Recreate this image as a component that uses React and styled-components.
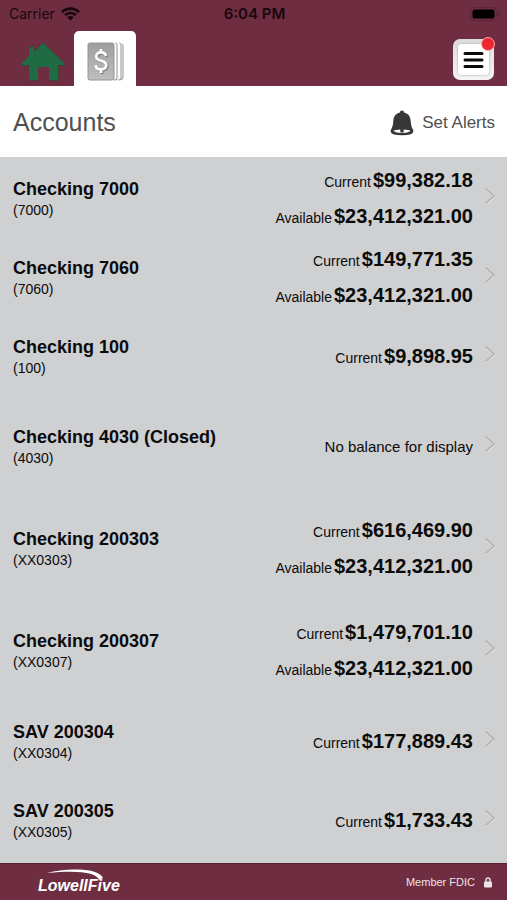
import styled, { createGlobalStyle } from "styled-components";

const accounts = [
    { name: "Checking 7000", mask: "(7000)", current: "$99,382.18", available: "$23,412,321.00" },
    { name: "Checking 7060", mask: "(7060)", current: "$149,771.35", available: "$23,412,321.00" },
    { name: "Checking 100", mask: "(100)", current: "$9,898.95" },
    { name: "Checking 4030 (Closed)", mask: "(4030)", roomy: true },
    { name: "Checking 200303", mask: "(XX0303)", current: "$616,469.90", available: "$23,412,321.00", roomy: true },
    { name: "Checking 200307", mask: "(XX0307)", current: "$1,479,701.10", available: "$23,412,321.00", roomy: true },
    { name: "SAV 200304", mask: "(XX0304)", current: "$177,889.43" },
    { name: "SAV 200305", mask: "(XX0305)", current: "$1,733.43" },
];

const WifiIcon = () => (
    <svg width="19" height="14" viewBox="0 0 19 14" aria-hidden="true">
        <path d="M1 5.2a12 12 0 0 1 17 0M4 8.2a7.8 7.8 0 0 1 11 0" fill="none" stroke="#16080d" strokeWidth="2.6" />
        <path d="M6.4 10.4a4.4 4.4 0 0 1 6.2 0l-3.1 3.1z" fill="#16080d" />
    </svg>
);

const BatteryIcon = () => (
    <svg width="30" height="14" viewBox="0 0 30 14" aria-hidden="true">
        <rect x="0.5" y="0.5" width="26" height="13" rx="4" fill="none" stroke="#592536" />
        <rect x="2.5" y="2.5" width="22" height="9" rx="2" fill="#000" />
        <path d="M28 5a2 2 0 0 1 0 4z" fill="#592536" />
    </svg>
);

const HomeIcon = () => (
    <svg width="46" height="40" viewBox="0 0 46 40" aria-hidden="true">
        <path d="M23 0 45 22l-1 2h-5v13q0 2-2 2h-8V25H18v14h-7q-2 0-2-2V24H2l-1-2 8-8V5l2-2h3v6z" fill="#3d4334" />
        <path d="M23 1 45 22l-1 1h-6v13q0 2-2 2h-7V25H18v13h-7q-2 0-2-2V23H2l-1-1 8-8V6l1-1h4v5z" fill="#1f6b43" />
    </svg>
);

const LedgerIcon = () => (
    <svg width="37" height="39" viewBox="0 0 37 39" aria-hidden="true">
        <defs>
            <linearGradient id="ledger" x1="0" y1="0" x2="0" y2="1">
                <stop offset="0" stopColor="#9c9e9f" />
                <stop offset="1" stopColor="#bcbebf" />
            </linearGradient>
        </defs>
        <rect x="1" y="1" width="26" height="37" rx="2" fill="url(#ledger)" stroke="#929495" />
        <path d="M28 1q2 0 2 2v33q0 2-3 2M32 1q2 0 2 2v33q0 2-3 2M35 2q1 0 1 2v31q0 2-2 3" fill="none" stroke="#a3a5a6" strokeWidth="1.2" />
        <g fill="none" strokeWidth="2.6">
            <path d="M15 8v4M15 28v4M20 15c-.5-2.400-2.300-3.600-5-3.600-2.800 0-4.800 1.500-4.800 4 0 5.400 10 3.200 10 8.600 0 2.800-2.200 4.400-5.200 4.400-3.100 0-5-1.500-5.400-4.200" stroke="#7b7d7e" />
            <path d="M14 7v4M14 27v4M19 14c-.5-2.400-2.300-3.600-5-3.600-2.800 0-4.800 1.500-4.800 4 0 5.400 10 3.200 10 8.600 0 2.800-2.200 4.400-5.200 4.400-3.100 0-5-1.500-5.400-4.200" stroke="#fff" />
        </g>
    </svg>
);

const MenuIcon = () => (
    <svg width="21" height="18" viewBox="0 0 21 18" aria-hidden="true">
        <path d="M2 2.500h17M2 9h17M2 15.500h17" stroke="#0b0b0b" strokeWidth="3" strokeLinecap="round" />
    </svg>
);

const BellIcon = () => (
    <svg width="24" height="26" viewBox="0 0 24 26" aria-hidden="true">
        <path d="M10 2.600V2q0-1.500 2-1.500T14 2v.6c4.600 1 6.400 4.400 6.700 8.400.3 4 .7 6 2.300 8.600q.5 1 .2 2.400-.8 3.300-11.200 3.300T.8 22Q.5 20.600 1 19.600c1.600-2.600 2-4.600 2.300-8.600.3-4 2.100-7.400 6.700-8.400z" fill="#373737" />
        <path d="M3.500 20.600q8.500-2.400 17 0-1 2.400-8.500 2.400t-8.500-2.400z" fill="#fff" />
        <path d="M10.300 18.500h3.400v3.400q-1.700 1.200-3.400 0z" fill="#373737" />
    </svg>
);

const ChevronIcon = () => (
    <svg width="12" height="19" viewBox="0 0 12 19" aria-hidden="true">
        <path d="M2 3l8.500 7L2 17.500" fill="none" stroke="#e0e0e1" strokeWidth="1.5" />
        <path d="M1.500 1.500l8.500 7.500-8.500 7.500" fill="none" stroke="#b0b1b3" strokeWidth="1.5" />
    </svg>
);

const LockIcon = () => (
    <svg width="8" height="11" viewBox="0 0 8 11" aria-hidden="true">
        <path d="M2 5V3a2 2 0 0 1 4 0v2" fill="none" stroke="#eee3e6" strokeWidth="1.4" />
        <rect x="0" y="4.5" width="8" height="6" rx="1" fill="#eee3e6" />
    </svg>
);

const AccountRow = ({ account }) => (
    <li>
        <Row type="button" $roomy={account.roomy}>
            <Details>
                <Name>{account.name}</Name>
                <Mask>{account.mask}</Mask>
            </Details>
            <Balances>
                {account.current && <Balance>Current<Amount>{account.current}</Amount></Balance>}
                {account.available && <Balance>Available<Amount>{account.available}</Amount></Balance>}
                {!account.current && <NoBalance>No balance for display</NoBalance>}
            </Balances>
            <Chevron><ChevronIcon /></Chevron>
        </Row>
    </li>
);

export default function App() {
    return (
        <Page>
            <GlobalStyle />
            <Header>
                <StatusBar>
                    <Carrier>Carrier <WifiIcon /></Carrier>
                    <Time>6:04 PM</Time>
                    <Battery><BatteryIcon /></Battery>
                </StatusBar>
                <NavBar>
                    <Tab href="#home" aria-label="Home"><HomeIcon /></Tab>
                    <Tab href="#accounts" aria-label="Accounts" $active><LedgerIcon /></Tab>
                    <MenuButton type="button" aria-label="Menu">
                        <MenuFace><MenuIcon /></MenuFace>
                        <Badge />
                    </MenuButton>
                </NavBar>
            </Header>
            <TitleBar>
                <Title>Accounts</Title>
                <AlertsButton type="button"><BellIcon />Set Alerts</AlertsButton>
            </TitleBar>
            <AccountList>
                {accounts.map((account) => <AccountRow key={account.name} account={account} />)}
            </AccountList>
            <Footer>
                <Logo>
                    LowellFive
                    <Swoosh viewBox="0 0 56 12" aria-hidden="true">
                        <path d="M0 4C18-1 52-2 56 9l-4 2C50 3 30 1 0 4z" fill="#fff" />
                    </Swoosh>
                </Logo>
                <Member>Member FDIC <LockIcon /></Member>
            </Footer>
        </Page>
    );
}

const GlobalStyle = createGlobalStyle`
  * {
    box-sizing: border-box;
  }
  body {
    margin: 0;
    font-family: "Liberation Sans", Arial, sans-serif;
    background: #cfd0d2;
  }
  button {
    font-family: inherit;
    border: none;
    background: none;
    padding: 0;
    cursor: pointer;
  }
  svg {
    display: block;
    flex-shrink: 0;
  }
`

const Page = styled.div`
  display: flex;
  flex-direction: column;
  min-height: 100vh;
`

const Header = styled.header`
  background: #6e2d40;
`

const StatusBar = styled.div`
  display: grid;
  grid-template-columns: 1fr auto 1fr;
  align-items: center;
  height: 27px;
  padding: 0 7px 0 9px;
  font-family: Inter, sans-serif;
  font-size: 14px;
  color: #16080d;
`

const Carrier = styled.div`
  display: flex;
  align-items: center;
  gap: 6px;
`

const Time = styled.div`
  font-size: 15px;
  font-weight: 600;
`

const Battery = styled.div`
  justify-self: end;
`

const NavBar = styled.nav`
  display: flex;
  align-items: flex-end;
  height: 59px;
  padding: 0 13px 0 12px;
`

const Tab = styled.a`
  display: flex;
  align-items: center;
  justify-content: center;
  width: 62px;
  height: 55px;
  padding-top: 6px;
  border-radius: 5px 5px 0 0;
  background: ${(props) => (props.$active ? "#fff" : "transparent")};
`

const MenuButton = styled.button`
  position: relative;
  width: 41px;
  height: 41px;
  margin: 0 0 6px auto;
  border-radius: 7px;
  background: linear-gradient(#dcdcdc, #f4f4f4);

  && {
    padding: 5px;
  }
`

const MenuFace = styled.span`
  display: flex;
  align-items: center;
  justify-content: center;
  height: 100%;
  border-radius: 3px;
  background: #fff;
  box-shadow: 0 0 2px #999;
`

const Badge = styled.span`
  position: absolute;
  top: -2px;
  right: -1px;
  width: 14px;
  height: 14px;
  border: 1px solid #f6a5ab;
  border-radius: 50%;
  background: #ed2630;
`

const TitleBar = styled.div`
  display: flex;
  align-items: center;
  justify-content: space-between;
  height: 71px;
  padding: 2px 12px 0 13px;
  background: #fff;
`

const Title = styled.h1`
  margin: 0;
  font-size: 25px;
  font-weight: 400;
  color: #505050;
`

const AlertsButton = styled.button`
  display: flex;
  align-items: center;
  gap: 8px;
  font-size: 17px;
  color: #505050;
`

const AccountList = styled.ul`
  flex: 1;
  margin: 0;
  padding: 0;
  list-style: none;
  background: #cfd0d2;
`

const Row = styled.button`
  display: flex;
  align-items: center;
  width: 100%;
  min-height: ${(props) => (props.$roomy ? "102px" : "79px")};
  color: #0b0b0b;

  && {
    padding: 4px 11px 0 13px;
  }
`

const Details = styled.span`
  flex: 1;
  text-align: left;
`

const Name = styled.span`
  display: block;
  font-size: 18px;
  font-weight: 700;
  line-height: 22px;
`

const Mask = styled.span`
  display: block;
  font-size: 14px;
  line-height: 20px;
`

const Balances = styled.span`
  display: flex;
  flex-direction: column;
  align-items: flex-end;
  padding-top: 2px;
`

const Balance = styled.span`
  display: flex;
  align-items: baseline;
  gap: 2px;
  font-size: 14px;
  line-height: 36px;
`

const Amount = styled.strong`
  font-size: 20px;
  line-height: 20px;
`

const NoBalance = styled.span`
  margin-bottom: 4px;
  font-size: 15px;
`

const Chevron = styled.span`
  margin: 0 0 5px 11px;
`

const Footer = styled.footer`
  display: flex;
  align-items: center;
  justify-content: space-between;
  height: 37px;
  padding: 0 15px 0 38px;
  border-top: 1px solid #5c2032;
  background: #6e2d40;
  color: #fff;
`

const Logo = styled.div`
  position: relative;
  padding-top: 8px;
  font-size: 16px;
  font-style: italic;
  font-weight: 700;
  line-height: 18px;
`

const Swoosh = styled.svg`
  position: absolute;
  top: 0;
  left: 9px;
  width: 56px;
`

const Member = styled.div`
  display: flex;
  align-items: center;
  gap: 9px;
  font-size: 11px;
  color: #eee3e6;
`
